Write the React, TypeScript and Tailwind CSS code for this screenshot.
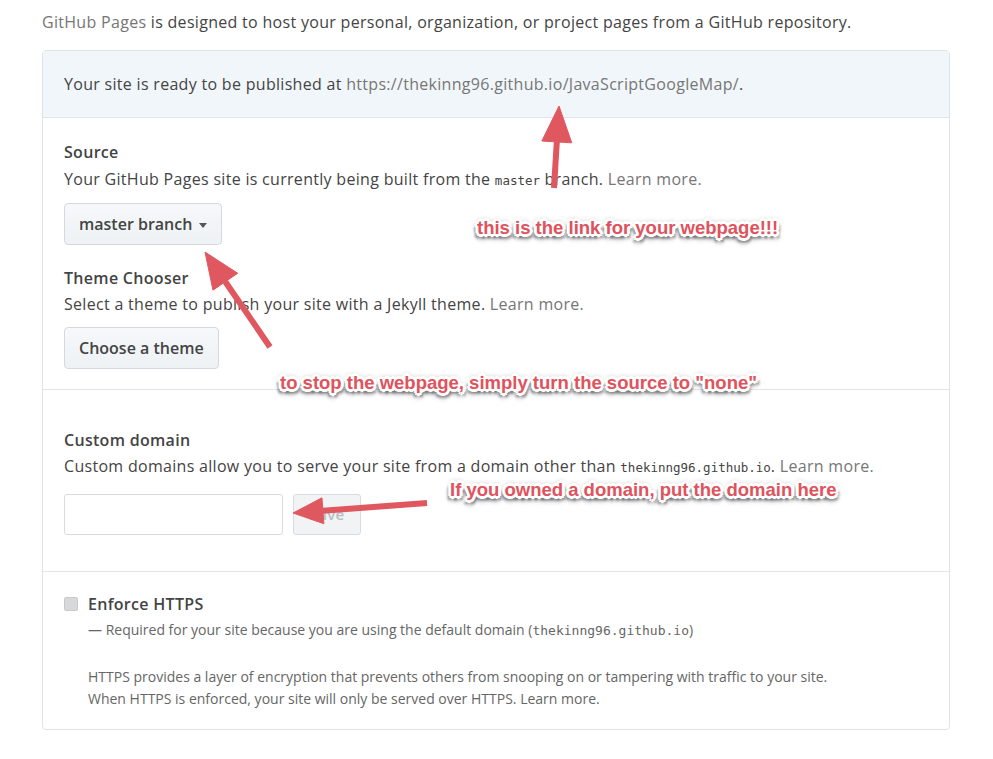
import React from "react";

const body = "font-['Open_Sans','Noto_Sans',sans-serif] tracking-[0.3px]";
const mono = "font-['DejaVu_Sans_Mono','Liberation_Mono',monospace] tracking-normal";
const callout =
  "absolute whitespace-nowrap font-['Liberation_Sans',Arial,sans-serif] font-bold text-[18.5px] leading-none tracking-normal text-[#e0525c] [text-shadow:-2px_-2px_0_#fff,2px_-2px_0_#fff,-2px_2px_0_#fff,2px_2px_0_#fff,0_3px_0_#fff,0_-3px_0_#fff,3px_0_0_#fff,-3px_0_0_#fff,3px_4px_3px_#6b6b70,-3px_4px_3px_#6b6b70,0_5px_5px_#888,0_-2px_5px_#aaa]";

type Pt = [number, number];

function arrowHead(from: Pt, to: Pt, len: number, half: number) {
  const dx = to[0] - from[0];
  const dy = to[1] - from[1];
  const d = Math.hypot(dx, dy);
  const ux = dx / d;
  const uy = dy / d;
  const bx = to[0] - ux * len;
  const by = to[1] - uy * len;
  const p1 = [bx - uy * half, by + ux * half];
  const p2 = [bx + uy * half, by - ux * half];
  return { base: [bx, by] as Pt, points: `${to[0]},${to[1]} ${p1[0]},${p1[1]} ${p2[0]},${p2[1]}` };
}

const arrows: { from: Pt; to: Pt; len: number; half: number }[] = [
  { from: [554, 188], to: [559, 106], len: 36, half: 15 },
  { from: [270, 347], to: [205, 252], len: 36, half: 15 },
  { from: [427, 503], to: [293, 513], len: 30, half: 13 },
];

function Arrows() {
  return (
    <svg className="absolute inset-0 pointer-events-none" width="993" height="759">
      {arrows.map((a, i) => {
        const h = arrowHead(a.from, a.to, a.len, a.half);
        return (
          <g key={i} fill="#e0585f" stroke="#e0585f">
            <line x1={a.from[0]} y1={a.from[1]} x2={h.base[0]} y2={h.base[1]} strokeWidth="6" />
            <polygon points={h.points} strokeWidth="1" />
          </g>
        );
      })}
    </svg>
  );
}

const Btn = ({ children }: { children: React.ReactNode }) => (
  <button className="h-[42px] px-[14px] rounded-[4px] border border-[#d5d9de] bg-gradient-to-b from-[#f6f8fa] to-[#eef2f5] text-[16px] font-semibold tracking-normal text-[#444]">
    {children}
  </button>
);

export default function App() {
  return (
    <div className={`relative w-[993px] h-[759px] bg-white text-[#444] ${body}`}>
      <div className="pl-[42px] w-[950px]">
        <p className="pt-[10px] h-[50px] text-[16px] leading-6">
          <span className="text-[#767676]">GitHub Pages</span> is designed to host your personal, organization, or project pages from a GitHub repository.
        </p>

        <div className="border border-[#dfe3e8] rounded-[4px]">
          <div className="h-[67px] bg-[#f1f6fa] border-b border-[#e1e6ea] flex items-center px-[21px] text-[16px]">
            Your site is ready to be published at&nbsp;<span className="text-[#767676]">https://thekinng96.github.io/JavaScriptGoogleMap/</span>.
          </div>

          <div className="px-[21px] pt-[22px] pb-[20px] border-b border-[#e1e4e8]">
            <h3 className="text-[16px] leading-6 font-semibold">Source</h3>
            <p className="mt-[3px] text-[16px] leading-6">
              Your GitHub Pages site is currently being built from the <code className={`${mono} text-[12.5px]`}>master</code> branch. <span className="text-[#767676]">Learn more.</span>
            </p>
            <div className="mt-[10px] flex">
              <Btn>
                master branch <span className="inline-block align-middle ml-[2px] border-x-[4px] border-x-transparent border-t-[5px] border-t-[#555]" />
              </Btn>
            </div>
            <h3 className="mt-[21px] text-[16px] leading-6 font-semibold">Theme Chooser</h3>
            <p className="mt-[2px] text-[16px] leading-6">
              Select a theme to publish your site with a Jekyll theme. <span className="text-[#767676]">Learn more.</span>
            </p>
            <div className="mt-[11px] flex">
              <Btn>Choose a theme</Btn>
            </div>
          </div>

          <div className="px-[21px] pt-[38px] pb-[36px] border-b border-[#e1e4e8]">
            <h3 className="text-[16px] leading-6 font-semibold">Custom domain</h3>
            <p className="mt-[2px] text-[16px] leading-6">
              Custom domains allow you to serve your site from a domain other than <code className={`${mono} text-[12.5px]`}>thekinng96.github.io</code>. <span className="text-[#767676]">Learn more.</span>
            </p>
            <div className="mt-[14px] flex gap-[10px]">
              <div className="w-[219px] h-[41px] border border-[#d8dce0] rounded-[3px]" />
              <div className="w-[68px] h-[41px] border border-[#d8dce0] rounded-[3px] bg-[#f1f3f5] flex items-center justify-center text-[15px] font-semibold text-[#b9bec4]">
                Save
              </div>
            </div>
          </div>

          <div className="px-[21px] pt-[20px] pb-[19px]">
            <div className="flex items-center gap-[10px]">
              <div className="w-[14px] h-[14px] bg-[#d6d8da] border border-[#c8cacc] rounded-[2px]" />
              <span className="text-[16px] leading-6 font-semibold">Enforce HTTPS</span>
            </div>
            <div className="pl-[24px] text-[14px] tracking-normal text-[#666]">
              <p className="mt-[4px] leading-5">
                — Required for your site because you are using the default domain (<code className={`${mono} text-[13px]`}>thekinng96.github.io</code>)
              </p>
              <p className="mt-[25px] leading-[22px]">
                HTTPS provides a layer of encryption that prevents others from snooping on or tampering with traffic to your site.
                <br />
                When HTTPS is enforced, your site will only be served over HTTPS. Learn more.
              </p>
            </div>
          </div>
        </div>
      </div>

      <Arrows />
      <span className={`${callout} left-[477px] top-[219px]`}>this is the link for your webpage!!!</span>
      <span className={`${callout} left-[280px] top-[374px]`}>to stop the webpage, simply turn the source to "none"</span>
      <span className={`${callout} left-[450px] top-[481px]`}>If you owned a domain, put the domain here</span>
    </div>
  );
}
